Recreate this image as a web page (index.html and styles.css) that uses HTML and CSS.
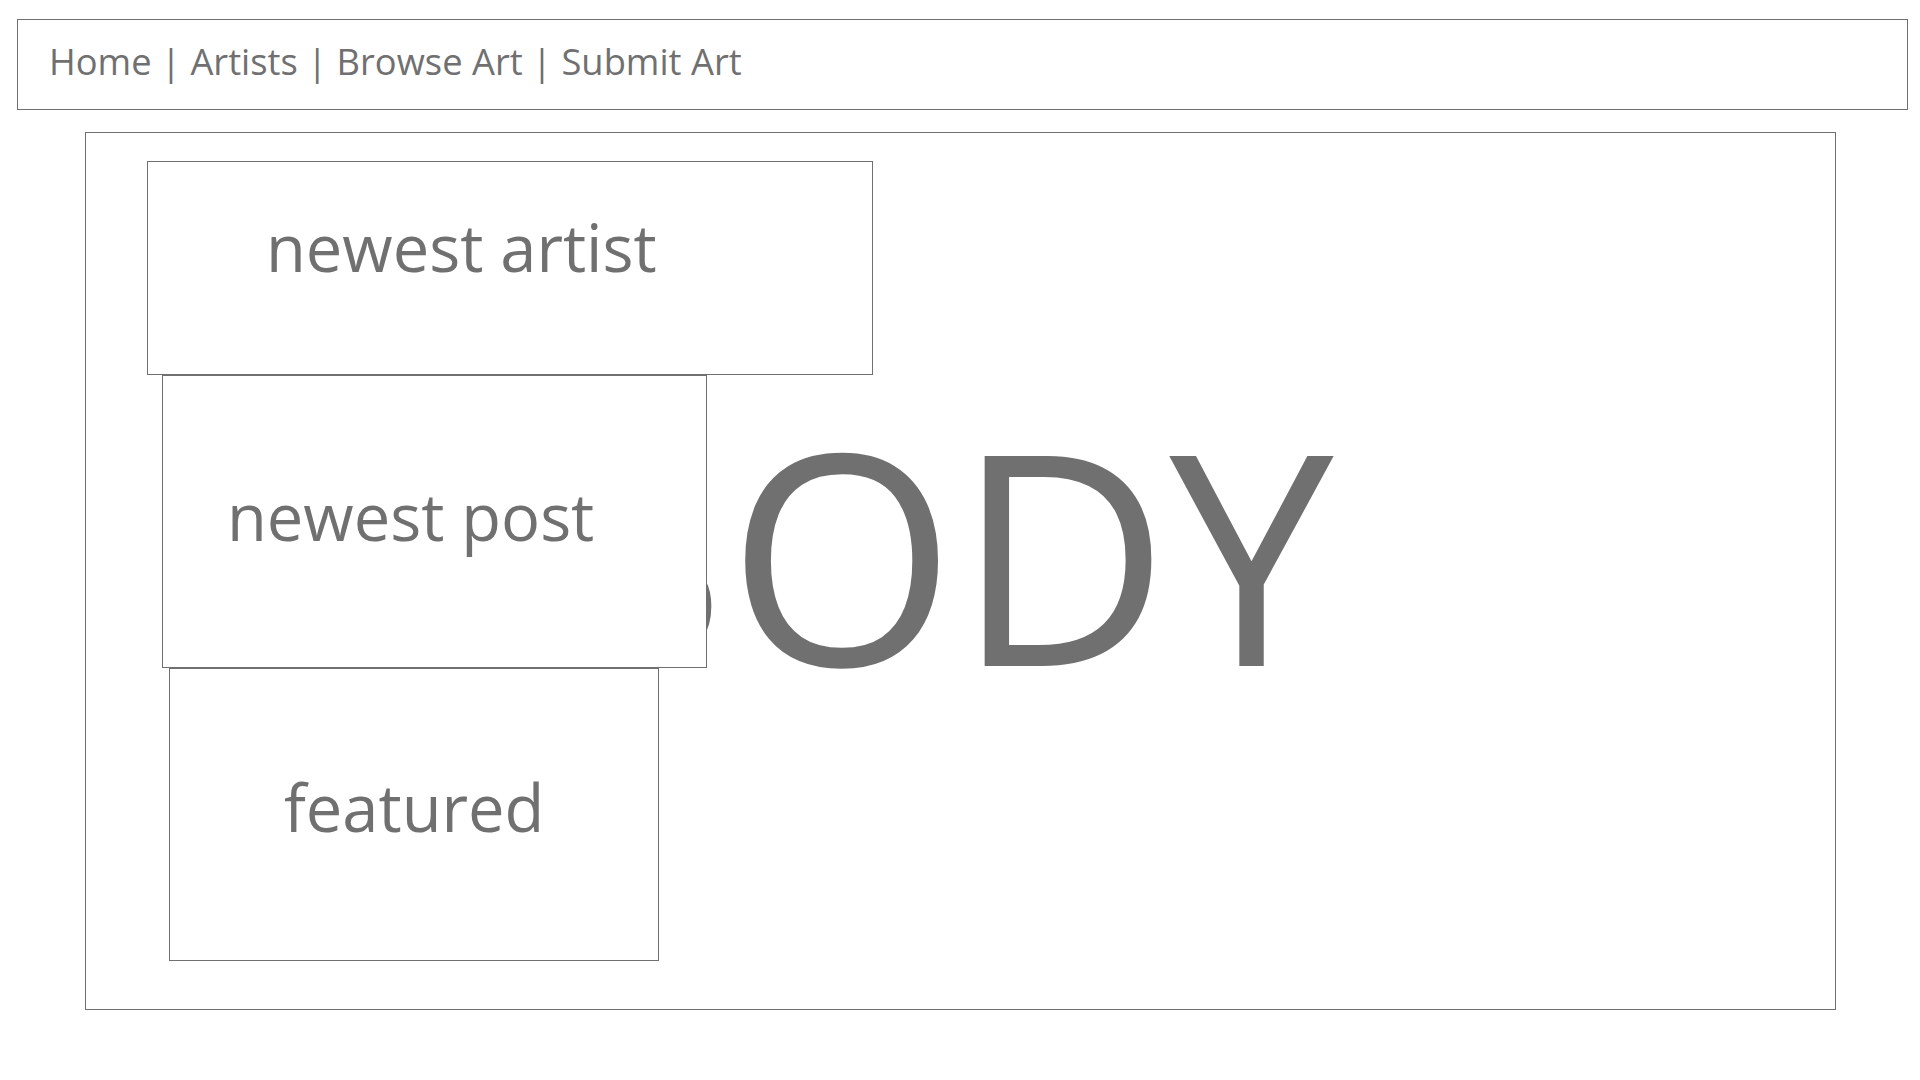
FILE: index.html
```html
<!DOCTYPE html>
<html lang="en">
<head>
<meta charset="utf-8">
<title>Art Site</title>
<link rel="stylesheet" href="styles.css">
</head>
<body>
<div class="page">
  <nav class="nav">Home | Artists | Browse Art | Submit Art</nav>
  <main class="main">
    <div class="body-label">BODY</div>
    <div class="panels">
      <div class="panel panel-artist">newest artist</div>
      <div class="panel panel-post">newest post</div>
      <div class="panel panel-featured">featured</div>
    </div>
  </main>
</div>
</body>
</html>
```
FILE: styles.css
```css
* { box-sizing: border-box; }
html, body {
  margin: 0;
  padding: 0;
  background: #ffffff;
}
body {
  font-family: "Open Sans", "Noto Sans", "Liberation Sans", sans-serif;
  color: #707070;
}
.page {
  width: 1920px;
  height: 1080px;
  padding: 19px 12px 0 17px;
}
.nav {
  height: 91px;
  border: 1px solid #707070;
  padding: 23px 0 0 31px;
  font-size: 36.3px;
  line-height: 36px;
  white-space: nowrap;
}
.main {
  position: relative;
  margin: 22px 0 0 68px;
  width: 1751px;
  height: 878px;
  border: 1px solid #707070;
  display: flex;
  align-items: center;
  justify-content: center;
}
.body-label {
  font-size: 294px;
  line-height: 294px;
  padding: 0 50px 39px 0;
  white-space: nowrap;
}
.panels {
  position: absolute;
  left: 61px;
  top: 28px;
  display: flex;
  flex-direction: column;
  align-items: flex-start;
}
.panel {
  background: #ffffff;
  border: 1px solid #707070;
  font-size: 65px;
  line-height: 65px;
  white-space: nowrap;
}
.panel-artist {
  width: 726px;
  height: 214px;
  padding: 53px 0 0 118px;
}
.panel-post {
  width: 545px;
  height: 293px;
  margin-left: 15px;
  padding: 108px 0 0 64px;
}
.panel-featured {
  width: 490px;
  height: 293px;
  margin-left: 22px;
  padding: 106px 0 0 114px;
}
```
